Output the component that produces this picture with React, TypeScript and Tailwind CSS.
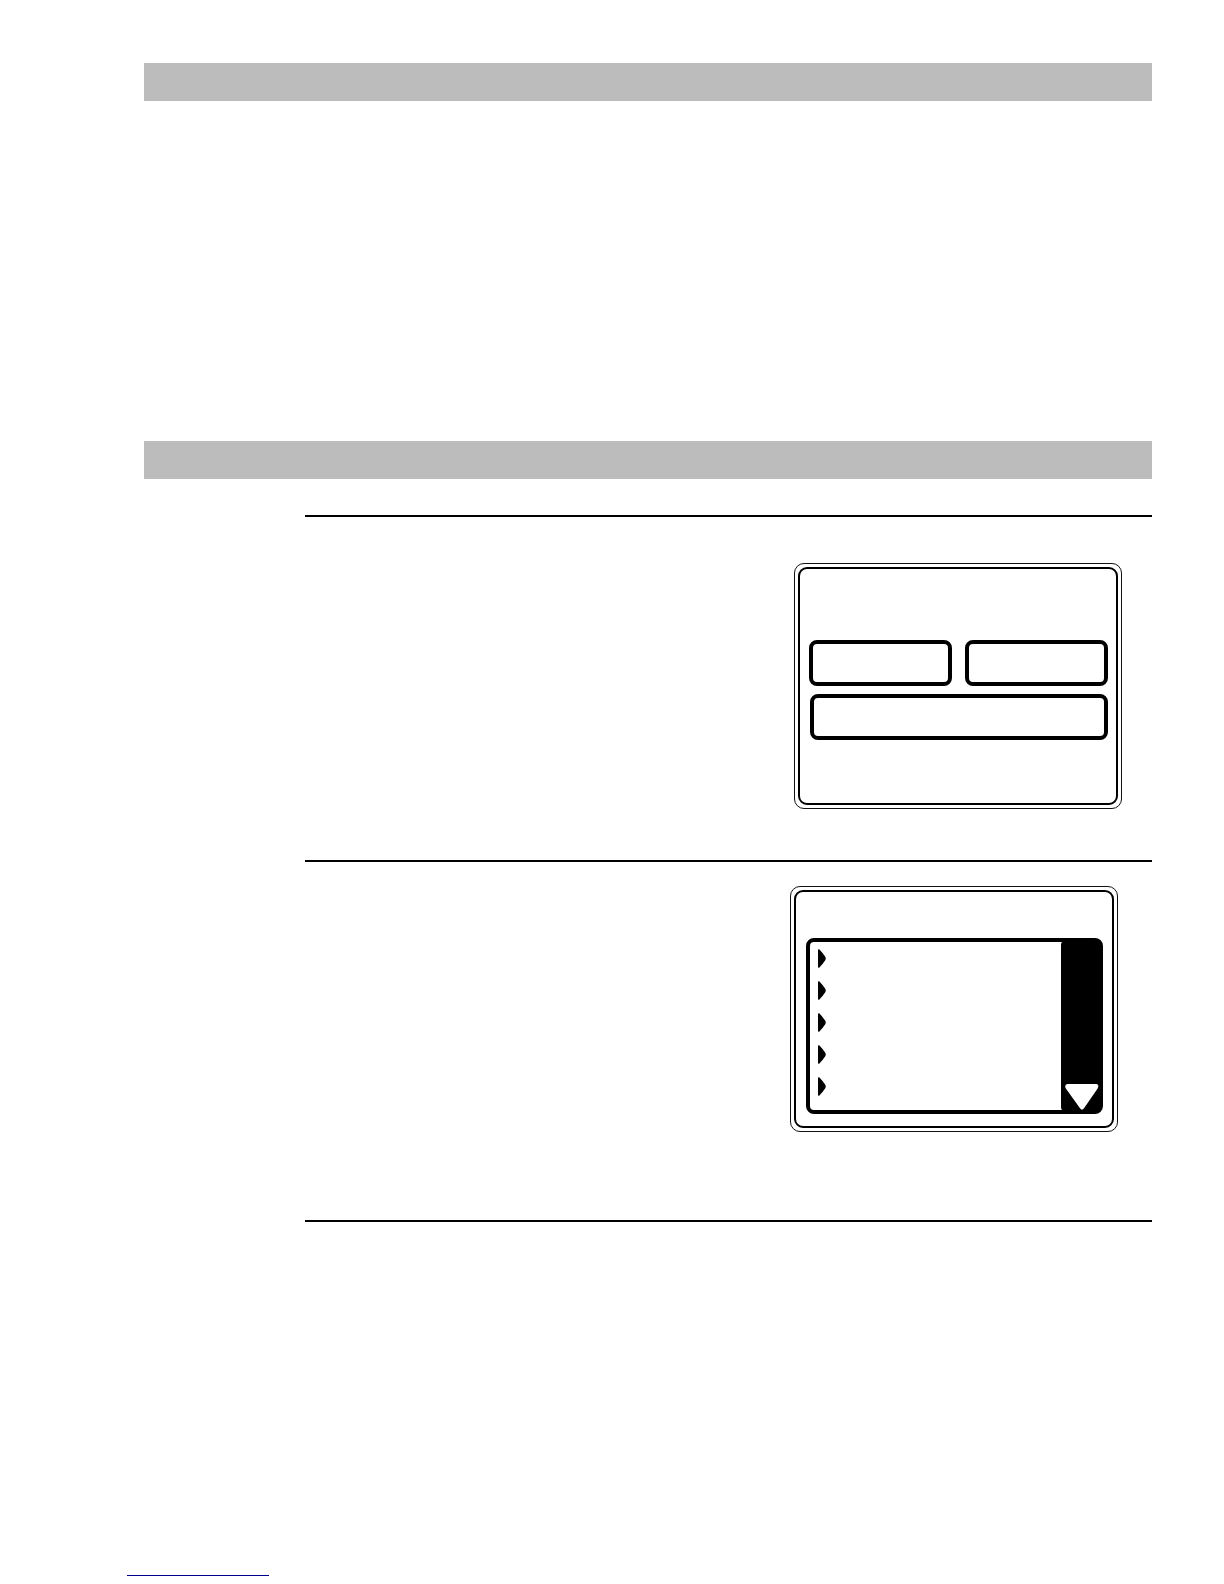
import type { ReactNode } from "react";

function SectionBar() {
  return <div className="h-[38px] bg-[#bcbcbc]" />;
}

function Rule() {
  return <hr className="h-[2px] border-0 bg-black" />;
}

// A touch screen with a thin outer bezel and a heavier inner frame.
function Screen({ children }: { children: ReactNode }) {
  return (
    <div className="flex h-[246px] w-[328px] rounded-[10px] border border-[#111] p-[3px]">
      <div className="flex flex-1 flex-col rounded-[9px] border-2 border-black">{children}</div>
    </div>
  );
}

const key = "h-[46px] rounded-lg border-4 border-black bg-white";

function KeyScreen() {
  return (
    <Screen>
      <div className="flex flex-col gap-2 pt-[71px] pr-2 pl-[9px]">
        <div className="flex gap-[13px]">
          <button type="button" aria-label="Left" className={`${key} flex-1`} />
          <button type="button" aria-label="Right" className={`${key} flex-1`} />
        </div>
        <button type="button" aria-label="Wide" className={`${key} ml-px`} />
      </div>
    </Screen>
  );
}

function Marker() {
  return (
    <svg viewBox="0 0 8 19" className="block h-[19px] w-2" aria-hidden="true">
      <path d="M0 1Q0 0 1.2 0.3Q4.5 3.7 7.1 7.6Q8.4 9.5 7.1 11.4Q4.5 15.3 1.2 18.7Q0 19 0 18Z" fill="#000" />
    </svg>
  );
}

function ListScreen() {
  return (
    <Screen>
      <div className="mt-[46px] mr-[9px] ml-[10px] flex h-[176px] justify-between rounded-lg border-4 border-black">
        <ul className="flex flex-1 flex-col gap-[13px] pt-[7px] pl-2">
          {[1, 2, 3, 4, 5].map((n) => (
            <li key={n} className="flex">
              <button type="button" aria-label={`Item ${n}`} className="flex flex-1">
                <Marker />
              </button>
            </li>
          ))}
        </ul>
        <div className="-my-px flex w-[38px] flex-col justify-end rounded-l-[4px] bg-black pb-px pl-1">
          <button type="button" aria-label="Scroll down" className="block">
            <svg viewBox="0 0 34 26" className="block h-[26px] w-[34px]" aria-hidden="true">
              <path
                d="M2.5 0H31Q34 0 33.2 3Q33 4 32.3 5L19 24.3Q17 27 15 24.3L1.2 5Q0.3 4 0.2 3Q0 0 2.5 0Z"
                fill="#fff"
              />
            </svg>
          </button>
        </div>
      </div>
    </Screen>
  );
}

export default function App() {
  return (
    <div className="flex min-h-screen flex-col bg-white pt-[63px] pb-2 font-['Liberation_Sans',sans-serif]">
      <main className="mr-[72px] ml-36">
        <SectionBar />
        <section className="h-[340px]" />
        <SectionBar />
        <section className="ml-[161px] pt-9">
          <Rule />
          <div className="flex justify-end pt-[46px] pr-[30px] pb-[51px]">
            <KeyScreen />
          </div>
          <Rule />
          <div className="flex justify-end pt-6 pr-[34px] pb-[88px]">
            <ListScreen />
          </div>
          <Rule />
        </section>
      </main>
      <footer className="mt-auto ml-[127px] flex">
        <a href="#top" aria-label="Back to top" className="w-[142px] border-b border-b-[#00008c]" />
      </footer>
    </div>
  );
}
